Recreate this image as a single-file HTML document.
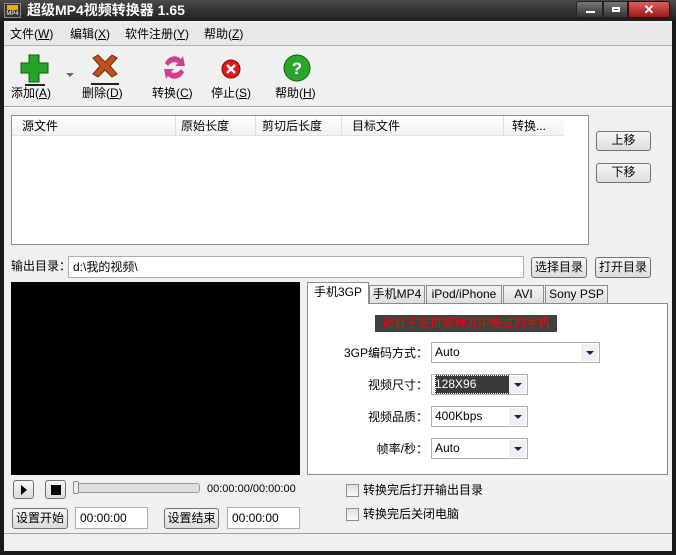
<!DOCTYPE html>
<html><head><meta charset="utf-8"><style>
*{margin:0;padding:0;box-sizing:border-box}
body{width:676px;height:555px;overflow:hidden;background:#1a1a1a;font-family:"Liberation Sans","Noto Sans CJK SC",sans-serif;font-size:12px;line-height:15px;color:#000;position:relative}
.a{position:absolute}
.win{left:4px;top:21px;width:668px;height:530px;background:#f0f0f0}
.btn{position:absolute;border:1px solid #707070;border-radius:3px;background:linear-gradient(#f6f6f6,#dcdcdc);text-align:center;font-size:12px;line-height:17px}
.inp{position:absolute;background:#fff;border:1px solid #abadb3;font-size:12px;padding-left:4px}
.tab{position:absolute;top:285px;height:18px;border:1px solid #8c8c8c;border-bottom:none;background:linear-gradient(#f4f4f4,#dedede);font-size:12px;line-height:17px;text-align:center}
.sel{position:absolute;background:#fff;border:1px solid #abadb3;height:21px;font-size:12px;line-height:19px;padding-left:3px}
.sel i{position:absolute;right:1px;top:1px;width:17px;height:17px;background:#f0f0f0}
.sel i:after{content:"";position:absolute;left:5px;top:7px;border-left:4px solid transparent;border-right:4px solid transparent;border-top:4px solid #1a1a5a}
.lbl{position:absolute;font-size:12px;text-align:right}
u{text-decoration:underline}
.ti{position:absolute;top:86px;font-size:12px}
.chk{position:absolute;width:13px;height:13px;border:1px solid #8f8f8f;background:linear-gradient(#e0e0e0,#fafafa)}
</style></head><body>
<div class="a" style="left:0;top:0;width:676px;height:21px;background:linear-gradient(#4a4a4a,#1e1e1e)"></div>
<div class="a" style="left:4px;top:3px;width:17px;height:15px;background:#333;border:1px solid #888;color:#fff;font-size:6px;line-height:20px;text-align:center;overflow:hidden"><div class="a" style="left:2px;top:1px;width:11px;height:5px;background:#e8b000"></div>MP4</div>
<div class="a" style="left:27px;top:2px;color:#fff;font-weight:bold;font-size:14px;line-height:17px">超级MP4视频转换器 1.65</div>
<div class="a" style="left:576px;top:1px;width:27px;height:17px;background:linear-gradient(#777,#333);border:1px solid #222;border-radius:3px 0 0 3px"><div class="a" style="left:9px;top:9px;width:9px;height:2px;background:#fff"></div></div>
<div class="a" style="left:603px;top:1px;width:25px;height:17px;background:linear-gradient(#777,#333);border:1px solid #222"><div class="a" style="left:8px;top:5px;width:8px;height:5px;border:2px solid #fff"></div></div>
<div class="a" style="left:628px;top:1px;width:42px;height:17px;background:linear-gradient(#d86060,#a01818);border:1px solid #400;border-radius:0 3px 3px 0;color:#fff;font-weight:bold;text-align:center;line-height:15px;font-size:13px">✕</div>
<div class="a win"></div>
<div class="a" style="left:4px;top:23px;width:668px;height:22px;background:#e8e8e8"></div>
<div class="a" style="left:10px;top:27px">文件(<u>W</u>)</div>
<div class="a" style="left:70px;top:27px">编辑(<u>X</u>)</div>
<div class="a" style="left:125px;top:27px">软件注册(<u>Y</u>)</div>
<div class="a" style="left:204px;top:27px">帮助(<u>Z</u>)</div>
<div class="a" style="left:4px;top:45px;width:668px;height:1px;background:#b0b0b0"></div>
<svg class="a" style="left:0;top:50px" width="340" height="40">
<path d="M29 5h10v8h9v10h-9v9h-10v-9h-8v-10h8z" fill="#27a327" stroke="#0d5e0d"/>
<rect x="25" y="34" width="20" height="2" fill="#222"/>
<path d="M66 23l4 4 4-4z" fill="#666"/>
<path d="M93 8l5-3 7 7 7-7 5 3-7 8 7 8-5 3-7-7-7 7-5-3 7-8z" fill="#c0501a" stroke="#6e2a08"/>
<rect x="91" y="33" width="28" height="2" fill="#222"/>
<path d="M165 13c3-7 11-9 16-4l2-3 2 10-10 0 3-3c-4-2-8 0-10 3z" fill="#d04090"/>
<path d="M184 22c-3 7-11 9-16 4l-2 3-2-10 10 0-3 3c4 2 8 0 10-3z" fill="#d04090"/>
<circle cx="231" cy="19" r="9" fill="#e01818" stroke="#800"/>
<path d="M227 15l8 8M235 15l-8 8" stroke="#fff" stroke-width="2.5"/>
<circle cx="297" cy="18" r="13" fill="#2aa62a" stroke="#0f5e0f"/>
<text x="297" y="24" fill="#fff" font-size="17" font-weight="bold" text-anchor="middle" font-family="Liberation Sans">?</text>
</svg>
<div class="ti" style="left:11px">添加(<u>A</u>)</div>
<div class="ti" style="left:82px">删除(<u>D</u>)</div>
<div class="ti" style="left:152px">转换(<u>C</u>)</div>
<div class="ti" style="left:211px">停止(<u>S</u>)</div>
<div class="ti" style="left:275px">帮助(<u>H</u>)</div>
<div class="a" style="left:4px;top:106px;width:668px;height:2px;border-top:1px solid #a0a0a0;border-bottom:1px solid #fff"></div>
<div class="a" style="left:11px;top:115px;width:578px;height:130px;background:#fff;border:1px solid #8c8c8c"></div>
<div class="a" style="left:12px;top:116px;width:552px;height:20px;background:linear-gradient(#fff,#f2f2f2);border-bottom:1px solid #e0e0e0"></div>
<div class="a" style="left:22px;top:119px">源文件</div>
<div class="a" style="left:181px;top:119px">原始长度</div>
<div class="a" style="left:262px;top:119px">剪切后长度</div>
<div class="a" style="left:352px;top:119px">目标文件</div>
<div class="a" style="left:512px;top:119px">转换...</div>
<div class="a" style="left:175px;top:116px;width:1px;height:20px;background:#e0e0e0"></div>
<div class="a" style="left:255px;top:116px;width:1px;height:20px;background:#e0e0e0"></div>
<div class="a" style="left:341px;top:116px;width:1px;height:20px;background:#e0e0e0"></div>
<div class="a" style="left:503px;top:116px;width:1px;height:20px;background:#e0e0e0"></div>
<div class="btn" style="left:596px;top:131px;width:55px;height:20px">上移</div>
<div class="btn" style="left:596px;top:163px;width:55px;height:20px">下移</div>
<div class="a" style="left:11px;top:259px">输出目录：</div>
<div class="inp" style="left:68px;top:256px;width:456px;height:22px;line-height:20px">d:\我的视频\</div>
<div class="btn" style="left:531px;top:257px;width:56px;height:21px;line-height:19px">选择目录</div>
<div class="btn" style="left:595px;top:257px;width:56px;height:21px;line-height:19px">打开目录</div>
<div class="a" style="left:11px;top:282px;width:289px;height:193px;background:#000"></div>
<div class="a" style="left:307px;top:303px;width:361px;height:172px;background:#fff;border:1px solid #8c8c8c"></div>
<div class="tab" style="left:307px;top:282px;height:22px;width:62px;background:#fff;line-height:19px">手机3GP</div>
<div class="tab" style="left:369px;width:56px">手机MP4</div>
<div class="tab" style="left:426px;width:76px">iPod/iPhone</div>
<div class="tab" style="left:503px;width:41px">AVI</div>
<div class="tab" style="left:545px;width:63px">Sony PSP</div>
<div class="a" style="left:375px;top:315px;width:182px;height:17px;background:#404040;color:#f00;line-height:17px;text-align:center">适合于支持各种3GP格式的手机</div>
<div class="lbl" style="left:330px;top:346px;width:98px">3GP编码方式：</div>
<div class="sel" style="left:431px;top:342px;width:169px">Auto<i></i></div>
<div class="lbl" style="left:330px;top:378px;width:98px">视频尺寸：</div>
<div class="sel" style="left:431px;top:374px;width:97px"><span style="background:#3a3a3a;color:#fff;display:inline-block;width:75px;outline:1px dotted #fff;outline-offset:-1px">128X96</span><i></i></div>
<div class="lbl" style="left:330px;top:410px;width:98px">视频品质：</div>
<div class="sel" style="left:431px;top:406px;width:97px">400Kbps<i></i></div>
<div class="lbl" style="left:330px;top:442px;width:98px">帧率/秒：</div>
<div class="sel" style="left:431px;top:438px;width:97px">Auto<i></i></div>
<div class="btn" style="left:13px;top:480px;width:21px;height:19px"><div class="a" style="left:7px;top:4px;border-top:5px solid transparent;border-bottom:5px solid transparent;border-left:6px solid #000"></div></div>
<div class="btn" style="left:45px;top:480px;width:21px;height:19px"><div class="a" style="left:5px;top:4px;width:10px;height:10px;background:#000"></div></div>
<div class="a" style="left:74px;top:483px;width:126px;height:10px;border:1px solid #999;border-radius:3px;background:#ddd"></div>
<div class="a" style="left:73px;top:481px;width:6px;height:13px;border:1px solid #888;border-radius:2px;background:#eee"></div>
<div class="a" style="left:207px;top:482px;font-size:11px">00:00:00/00:00:00</div>
<div class="btn" style="left:12px;top:508px;width:56px;height:21px;line-height:19px">设置开始</div>
<div class="inp" style="left:75px;top:507px;width:73px;height:22px;line-height:20px">00:00:00</div>
<div class="btn" style="left:164px;top:508px;width:55px;height:21px;line-height:19px">设置结束</div>
<div class="inp" style="left:227px;top:507px;width:73px;height:22px;line-height:20px">00:00:00</div>
<div class="chk" style="left:346px;top:484px"></div>
<div class="a" style="left:363px;top:483px">转换完后打开输出目录</div>
<div class="chk" style="left:346px;top:508px"></div>
<div class="a" style="left:363px;top:507px">转换完后关闭电脑</div>
<div class="a" style="left:4px;top:533px;width:668px;height:18px;border-top:1px solid #a0a0a0;background:#f0f0f0"></div>
</body></html>
